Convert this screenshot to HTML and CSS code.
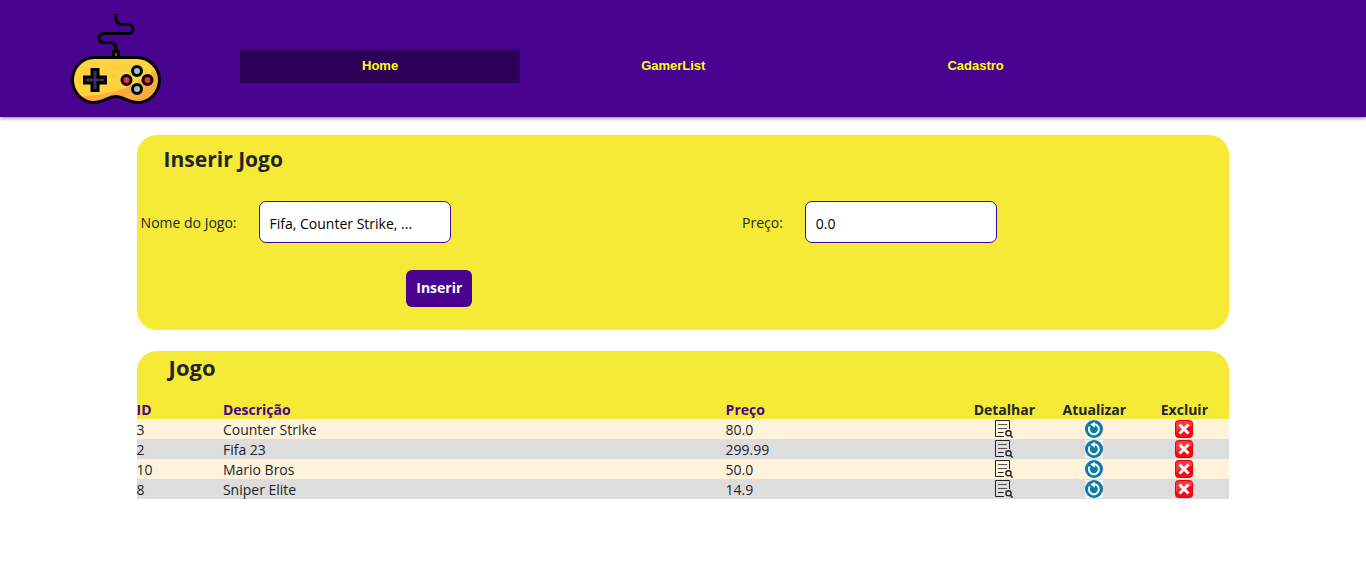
FILE: index.html
```html
<!DOCTYPE html>
<html lang="pt-BR">
<head>
<meta charset="utf-8">
<meta name="viewport" content="width=device-width, initial-scale=1">
<title>GamerList</title>
<link rel="stylesheet" href="styles.css">
</head>
<body>
<svg class="sprite" aria-hidden="true">
  <symbol id="detail" viewBox="0 0 18 18">
    <path d="M14.500 9V.5H.5v16H9" fill="none" stroke="#222" stroke-width="1"/>
    <path d="M3 4.500h9M3 8.500h9" stroke="#555" stroke-width="1"/>
    <path d="M3 12.500h5.500" stroke="#222" stroke-width="1"/>
    <circle cx="13.500" cy="13.300" r="2.600" fill="none" stroke="#222" stroke-width="1.400"/>
    <path d="M15.400 15.300l2.200 2.300" stroke="#222" stroke-width="1.500"/>
  </symbol>
  <symbol id="update" viewBox="0 0 18 18">
    <path d="M0 0h18v18H0z" fill="#f4f4f4"/>
    <circle cx="9" cy="9" r="9" fill="#0a7aaa"/>
    <path d="M9.500 4.300A5 5 0 1 1 4.700 6.500" fill="none" stroke="#fff" stroke-width="2"/>
    <path d="M5.200 4.600L9.800 1.800v6z" fill="#fff"/>
  </symbol>
  <symbol id="remove" viewBox="0 0 18 18">
    <rect width="18" height="18" rx="4" fill="#e60012"/>
    <rect x="1" y="1" width="16" height="16" rx="3" fill="#fa0812"/>
    <path d="M1 4a3 3 0 0 1 3-3h10a3 3 0 0 1 3 3v2Q8 6 1 12z" fill="#ff5a5a" opacity=".6"/>
    <path d="M5.500 5.500l7 7m0-7l-7 7" stroke="#fff" stroke-width="3" stroke-linecap="square"/>
  </symbol>
</svg>
<header class="topbar">
  <a class="logo" href="#" aria-label="Início">
    <svg viewBox="0 0 90 90" width="90" height="90" aria-hidden="true">
      <path d="M45 0v4q0 6.500 6.500 6.500h6a4.500 4.500 0 0 1 0 9H32.500a4.500 4.500 0 0 0 0 9H39q6 0 6 6v3" fill="none" stroke="#000" stroke-width="3"/>
      <rect x="42.500" y="37.500" width="5" height="6" fill="#8a4a10" stroke="#000" stroke-width="3"/>
      <path d="M23 43.500h43c12 0 22.500 10 22.500 22.500S78 88.500 67 88.500c-10 0-14-6-22.500-6s-11 6-21.500 6C11 88.500 1.500 78 1.500 66S11 43.500 23 43.500z" fill="#ffd23f"/>
      <path d="M88.500 66C88.500 78 78 88.500 67 88.500c-10 0-14-6-22.500-6s-11 6-21.500 6q-8 0-14-6C38 82 70 71 85 54q3.500 5 3.500 12z" fill="#ffac3e"/>
      <path d="M23 43.500h43c12 0 22.500 10 22.500 22.500S78 88.500 67 88.500c-10 0-14-6-22.500-6s-11 6-21.500 6C11 88.500 1.500 78 1.500 66S11 43.500 23 43.500z" fill="none" stroke="#000" stroke-width="3"/>
      <path d="M21 55.500h6v7.500h7.500v6H27v7.500h-6V69h-7.500v-6H21z" fill="#34344c" stroke="#000" stroke-width="3"/>
      <g stroke="#000" stroke-width="3">
        <circle cx="66" cy="57" r="4.500" fill="#8cc8c8"/>
        <circle cx="66" cy="75" r="4.500" fill="#8cc8c8"/>
        <circle cx="55.500" cy="66" r="4.500" fill="#ea3434"/>
        <circle cx="76.500" cy="66" r="4.500" fill="#ea3434"/>
      </g>
    </svg>
  </a>
  <nav class="nav">
    <a class="nav-link active" href="#">Home</a>
    <a class="nav-link" href="#">GamerList</a>
    <a class="nav-link" href="#">Cadastro</a>
  </nav>
</header>
<main class="content">
  <section class="panel form-panel">
    <h2 class="panel-title">Inserir Jogo</h2>
    <form class="form">
      <div class="field">
        <label for="nome">Nome do Jogo:</label>
        <input class="input" id="nome" type="text" placeholder="Fifa, Counter Strike, ...">
      </div>
      <div class="field">
        <label for="preco">Preço:</label>
        <input class="input" id="preco" type="text" placeholder="0.0">
      </div>
      <button class="submit" type="button">Inserir</button>
    </form>
  </section>
  <section class="panel list-panel">
    <h2 class="panel-title list-title">Jogo</h2>
    <table class="games">
      <colgroup><col class="col-id"><col class="col-name"><col class="col-price"><col class="col-action"><col class="col-action"><col class="col-action"></colgroup>
      <thead>
        <tr><th>ID</th><th>Descrição</th><th>Preço</th><th class="action">Detalhar</th><th class="action">Atualizar</th><th class="action">Excluir</th></tr>
      </thead>
      <tbody>
        <tr><td>3</td><td>Counter Strike</td><td>80.0</td>
          <td class="action"><a href="#" aria-label="Detalhar"><svg class="icon"><use href="#detail"/></svg></a></td>
          <td class="action"><a href="#" aria-label="Atualizar"><svg class="icon"><use href="#update"/></svg></a></td>
          <td class="action"><a href="#" aria-label="Excluir"><svg class="icon"><use href="#remove"/></svg></a></td></tr>
        <tr><td>2</td><td>Fifa 23</td><td>299.99</td>
          <td class="action"><a href="#" aria-label="Detalhar"><svg class="icon"><use href="#detail"/></svg></a></td>
          <td class="action"><a href="#" aria-label="Atualizar"><svg class="icon"><use href="#update"/></svg></a></td>
          <td class="action"><a href="#" aria-label="Excluir"><svg class="icon"><use href="#remove"/></svg></a></td></tr>
        <tr><td>10</td><td>Mario Bros</td><td>50.0</td>
          <td class="action"><a href="#" aria-label="Detalhar"><svg class="icon"><use href="#detail"/></svg></a></td>
          <td class="action"><a href="#" aria-label="Atualizar"><svg class="icon"><use href="#update"/></svg></a></td>
          <td class="action"><a href="#" aria-label="Excluir"><svg class="icon"><use href="#remove"/></svg></a></td></tr>
        <tr><td>8</td><td>Sniper Elite</td><td>14.9</td>
          <td class="action"><a href="#" aria-label="Detalhar"><svg class="icon"><use href="#detail"/></svg></a></td>
          <td class="action"><a href="#" aria-label="Atualizar"><svg class="icon"><use href="#update"/></svg></a></td>
          <td class="action"><a href="#" aria-label="Excluir"><svg class="icon"><use href="#remove"/></svg></a></td></tr>
      </tbody>
    </table>
  </section>
</main>
</body>
</html>
```
FILE: styles.css
```css
* { box-sizing: border-box; }
body {
  margin: 0;
  background: #fff;
  color: #212529;
  font: 14px/20px "Segoe UI", "Open Sans", "Noto Sans", sans-serif;
}
.sprite { display: none; }
.topbar {
  display: flex;
  align-items: center;
  padding: 14px 0 13px 71px;
  background: #490391;
  box-shadow: 0 1px 4px rgba(0, 0, 0, .5);
}
.logo { display: flex; margin-right: 79px; }
.nav { display: flex; margin-top: 15px; }
.nav-link {
  padding: 7px 121px 9px;
  color: #ffff1a;
  font: bold 13px/17px "Liberation Sans", Arial, sans-serif;
  text-decoration: none;
}
.nav-link.active { padding: 7px 122px 9px; background: #2d0157; }
.content {
  display: flex;
  flex-direction: column;
  gap: 21px;
  width: 80%;
  margin: 18px auto 0;
}
.panel { background: #f5ea36; border-radius: 20px 20px 0 0; }
.form-panel { padding: 11px 0 23px; border-radius: 20px; }
.panel-title { margin: 0 0 0 27px; font-size: 21px; line-height: 26px; font-weight: 700; }
.form {
  display: grid;
  grid-template-columns: 55.4% 1fr;
  row-gap: 27px;
  margin-top: 29px;
}
.field { display: flex; align-items: center; gap: 22px; }
.field:first-child { padding-left: 4px; }
.field label { padding-top: 2px; }
.input {
  width: 192px;
  height: 42px;
  padding: 2px 10px 0;
  border: 1px solid #490391;
  border-radius: 7px;
  background: #fff;
  color: #000;
  font: inherit;
}
.input::placeholder { color: #000; opacity: 1; }
.submit {
  justify-self: center;
  padding: 8px 10px 9px;
  border: 0;
  border-radius: 6px;
  background: #490391;
  color: #fff;
  font: bold 14px/20px "Segoe UI", "Open Sans", "Noto Sans", sans-serif;
}
.list-panel { padding-top: 3px; }
.list-title { margin-left: 32px; font-size: 22px; }
.games {
  width: 100%;
  margin-top: 19px;
  border-collapse: collapse;
  table-layout: fixed;
}
.games th, .games td { height: 20px; padding: 0; text-align: left; }
.games td { padding-top: 2px; line-height: 18px; }
.games thead th { padding-top: 1px; line-height: 19px; color: #490391; font-weight: 700; }
.games tbody tr { background: #fff3dc; }
.games tbody tr:nth-child(even) { background: #ddd; }
.games .action { text-align: center; }
.games td.action { padding: 1px 0; }
.games th.action { color: #212529; }
.action a { display: flex; justify-content: center; }
.icon { display: block; width: 18px; height: 18px; }
.col-id { width: 7.9%; }
.col-name { width: 46%; }
.col-action { width: 90px; }
```
